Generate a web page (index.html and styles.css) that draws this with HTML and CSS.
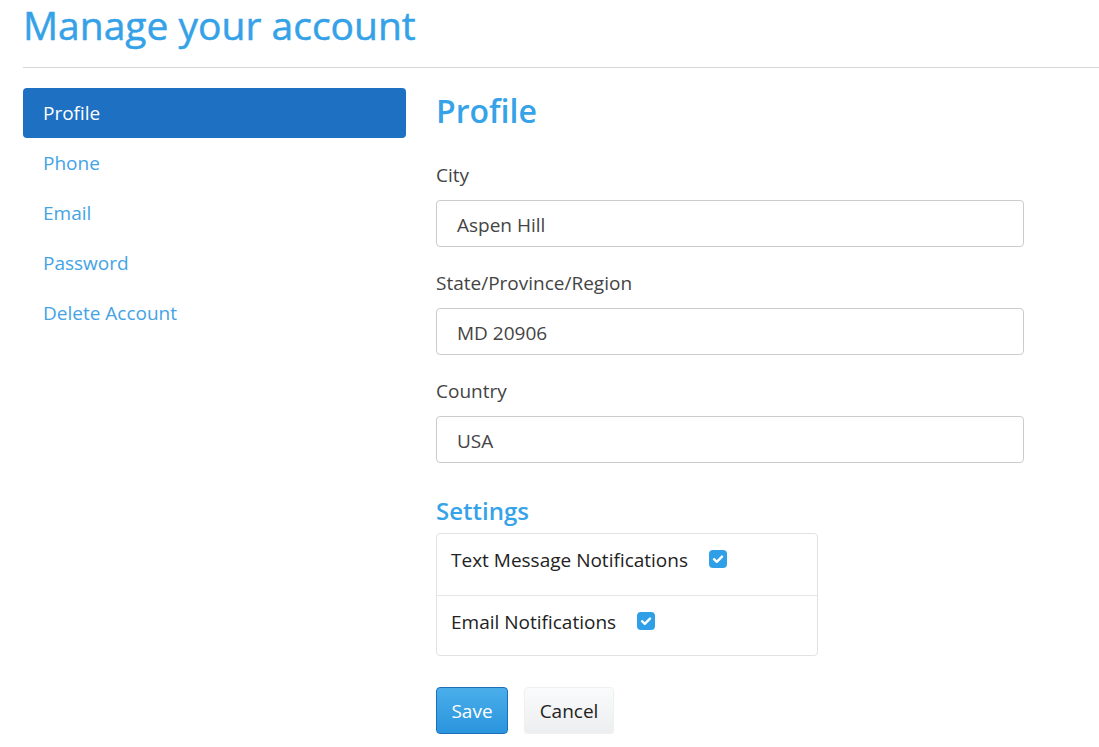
FILE: index.html
```html
<!DOCTYPE html>
<html>
<head>
<meta charset="utf-8">
<link rel="stylesheet" href="styles.css">
</head>
<body>
<div class="page">
  <h1 class="title">Manage your account</h1>
  <hr class="rule">
  <div class="layout">
    <nav class="sidenav">
      <a class="navitem active">Profile</a>
      <a class="navitem">Phone</a>
      <a class="navitem">Email</a>
      <a class="navitem">Password</a>
      <a class="navitem">Delete Account</a>
    </nav>
    <main class="content">
      <h2 class="heading">Profile</h2>
      <div class="field">
        <label class="label">City</label>
        <div class="input">Aspen Hill</div>
      </div>
      <div class="field">
        <label class="label">State/Province/Region</label>
        <div class="input">MD 20906</div>
      </div>
      <div class="field">
        <label class="label">Country</label>
        <div class="input">USA</div>
      </div>
      <h3 class="subheading">Settings</h3>
      <div class="settings">
        <div class="setrow">
          <span>Text Message Notifications</span>
          <span class="check"><svg viewBox="0 0 18 18" width="18" height="18"><path d="M5 9.2 L7.8 11.8 L13 6.6" fill="none" stroke="#fff" stroke-width="2.4" stroke-linecap="round" stroke-linejoin="round"/></svg></span>
        </div>
        <div class="setrow">
          <span>Email Notifications</span>
          <span class="check"><svg viewBox="0 0 18 18" width="18" height="18"><path d="M5 9.2 L7.8 11.8 L13 6.6" fill="none" stroke="#fff" stroke-width="2.4" stroke-linecap="round" stroke-linejoin="round"/></svg></span>
        </div>
      </div>
      <div class="actions">
        <button class="btn save">Save</button>
        <button class="btn cancel">Cancel</button>
      </div>
    </main>
  </div>
</div>
</body>
</html>
```
FILE: styles.css
```css
* { box-sizing: border-box; }
html, body { margin: 0; padding: 0; background: #fff; }
body {
  font-family: "Open Sans", "Noto Sans", sans-serif;
  color: #333;
  font-size: 19px;
}
.page { padding-left: 23px; }
.title {
  margin: 0;
  padding-top: 1px;
  height: 59px;
  font-size: 39px;
  font-weight: 400;
  color: #35a2e8;
  line-height: 48px;
  letter-spacing: 0;
  -webkit-text-stroke: 0.5px #35a2e8;
}
.rule {
  margin: 8px 0 0 0;
  border: 0;
  border-top: 1px solid #d6d6d6;
  height: 0;
}
.layout {
  display: flex;
  gap: 30px;
  margin-top: 20px;
}
.sidenav {
  width: 383px;
  display: flex;
  flex-direction: column;
}
.navitem {
  display: block;
  height: 50px;
  line-height: 50px;
  padding-left: 20px;
  font-size: 19px;
  color: #44a3e6;
  border-radius: 4px;
}
.navitem.active {
  background: #1e70c2;
  color: #fff;
}
.content { width: 588px; }
.heading {
  margin: 0;
  font-size: 32px;
  font-weight: 600;
  color: #36a3e8;
  line-height: 46px;
  height: 74px;
}
.field { margin-bottom: 23px; }
.label {
  display: block;
  font-size: 19px;
  line-height: 27px;
  color: #444;
  margin: 0 0 11px 0;
}
.input {
  height: 47px;
  border: 1px solid #ccc;
  border-radius: 4px;
  padding: 3px 0 0 20px;
  line-height: 42px;
  font-size: 19px;
  color: #444;
}
.subheading {
  margin: 33px 0 7px 0;
  font-size: 24px;
  font-weight: 600;
  color: #36a3e8;
  line-height: 30px;
}
.settings {
  width: 382px;
  border: 1px solid #e2e2e2;
  border-radius: 4px;
}
.setrow {
  height: 61px;
  display: flex;
  align-items: flex-start;
  padding: 13px 0 0 14px;
  gap: 21px;
  font-size: 19px;
  color: #222;
  line-height: 27px;
}
.setrow + .setrow { border-top: 1px solid #e6e6e6; height: 60px; }
.check {
  width: 18px;
  height: 18px;
  margin-top: 3px;
  background: #2f9fe8;
  border-radius: 4px;
  display: block;
}
.check svg { display: block; }
.actions {
  display: flex;
  gap: 16px;
  margin-top: 31px;
}
.btn {
  font-family: inherit;
  font-size: 19px;
  height: 47px;
  border-radius: 4px;
  padding: 0;
  cursor: pointer;
}
.save {
  width: 72px;
  color: #fff;
  background: linear-gradient(#4aaeea, #2a94dd);
  border: 1px solid #1e6fb8;
}
.cancel {
  width: 90px;
  color: #222;
  background: linear-gradient(#fafbfc, #eceef0);
  border: 1px solid #f0f0f0;
  box-shadow: 0 1px 1px rgba(0,0,0,0.05);
}
```
